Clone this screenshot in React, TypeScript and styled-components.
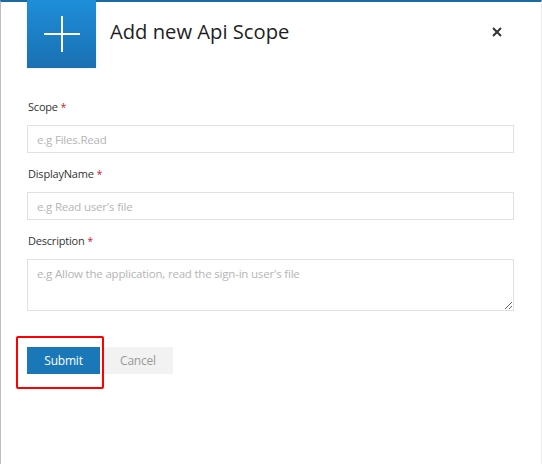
import styled, { createGlobalStyle } from "styled-components";

const GlobalStyle = createGlobalStyle`
  html, body {
    margin: 0;
    padding: 0;
    background: #ffffff;
  }
  body {
    font-family: "Open Sans", "Noto Sans", sans-serif;
  }
`;

const Dialog = styled.div`
  position: relative;
  box-sizing: border-box;
  width: 542px;
  height: 464px;
  background: #fff;
  border-top: 2px solid #1a6aa3;
  border-left: 1px solid #bdbdbd;
  border-right: 1px solid #ececec;
  padding: 0 27px 0 26px;
`;

const Header = styled.div`
  display: flex;
  align-items: flex-start;
  margin-top: -2px;
  height: 90px;
`;

const IconBox = styled.div`
  width: 69px;
  height: 68px;
  flex-shrink: 0;
  display: flex;
  align-items: center;
  justify-content: center;
  background: linear-gradient(180deg, #1e8ed9 0%, #1a70b2 100%);
  box-shadow: 0 0 2px rgba(0, 0, 0, 0.12);
`;

const Title = styled.h1`
  margin: 18px 0 0 14px;
  font-family: "Open Sans", "Noto Sans", sans-serif;
  font-weight: 400;
  font-size: 20.2px;
  line-height: 26px;
  color: #1e1e1e;
  flex: 1;
`;

const CloseButton = styled.button`
  margin: 20px 5px 0 0;
  width: 24px;
  height: 24px;
  padding: 0;
  border: none;
  background: transparent;
  display: flex;
  align-items: center;
  justify-content: center;
  cursor: pointer;
`;

const Form = styled.form`
  display: flex;
  flex-direction: column;
  margin-top: 9px;
`;

const Field = styled.div`
  display: flex;
  flex-direction: column;
  margin-bottom: 13px;
`;

const Label = styled.label`
  font-family: "Open Sans", "Noto Sans", sans-serif;
  font-size: 11px;
  line-height: 16px;
  color: #333;
  margin: 0 0 10px 1px;
  letter-spacing: -0.2px;
`;

const Required = styled.span`
  color: #c8102e;
  margin-left: 3px;
  font-size: 10px;
`;

const Input = styled.input`
  box-sizing: border-box;
  height: 28px;
  width: 100%;
  border: 1px solid #e1e1e1;
  padding: 0 9px;
  font-family: "Open Sans", "Noto Sans", sans-serif;
  font-size: 11.5px;
  letter-spacing: -0.2px;
  color: #333;
  outline: none;
  &::placeholder {
    color: #b5b5b5;
  }
`;

const TextArea = styled.textarea`
  box-sizing: border-box;
  height: 52px;
  width: 100%;
  border: 1px solid #e1e1e1;
  padding: 6px 9px;
  font-family: "Open Sans", "Noto Sans", sans-serif;
  font-size: 11.5px;
  letter-spacing: -0.2px;
  color: #333;
  resize: vertical;
  outline: none;
  display: block;
  &::placeholder {
    color: #b5b5b5;
  }
`;

const Actions = styled.div`
  position: relative;
  display: flex;
  gap: 3px;
  margin-top: 23px;
`;

const Button = styled.button<{ $primary?: boolean }>`
  height: 27px;
  width: ${(p) => (p.$primary ? "73px" : "70px")};
  border: none;
  padding: 0;
  font-family: "Open Sans", "Noto Sans", sans-serif;
  font-size: 12px;
  letter-spacing: -0.2px;
  cursor: pointer;
  background: ${(p) => (p.$primary ? "#1a78b8" : "#f2f2f2")};
  color: ${(p) => (p.$primary ? "#ffffff" : "#999999")};
`;

const Highlight = styled.div`
  position: absolute;
  left: -11px;
  top: -11px;
  width: 84px;
  height: 49px;
  border: 2px solid #ff0000;
  border-radius: 2px;
  pointer-events: none;
`;

export default function App() {
  return (
    <>
      <GlobalStyle />
      <Dialog>
        <Header>
          <IconBox>
            <svg width="36" height="36" viewBox="0 0 36 36">
              <path d="M18 0v36M0 18h36" stroke="#fff" strokeWidth="2" />
            </svg>
          </IconBox>
          <Title>Add new Api Scope</Title>
          <CloseButton aria-label="Close">
            <svg width="10" height="10" viewBox="0 0 10 10">
              <path d="M1 1l8 8M9 1l-8 8" stroke="#333" strokeWidth="2" />
            </svg>
          </CloseButton>
        </Header>
        <Form onSubmit={(e) => e.preventDefault()}>
          <Field>
            <Label>
              Scope<Required>*</Required>
            </Label>
            <Input placeholder="e.g Files.Read" />
          </Field>
          <Field>
            <Label>
              DisplayName<Required>*</Required>
            </Label>
            <Input placeholder="e.g Read user's file" />
          </Field>
          <Field>
            <Label>
              Description<Required>*</Required>
            </Label>
            <TextArea placeholder="e.g Allow the application, read the sign-in user's file" />
          </Field>
          <Actions>
            <Button type="submit" $primary>
              Submit
            </Button>
            <Button type="button">Cancel</Button>
            <Highlight />
          </Actions>
        </Form>
      </Dialog>
    </>
  );
}
